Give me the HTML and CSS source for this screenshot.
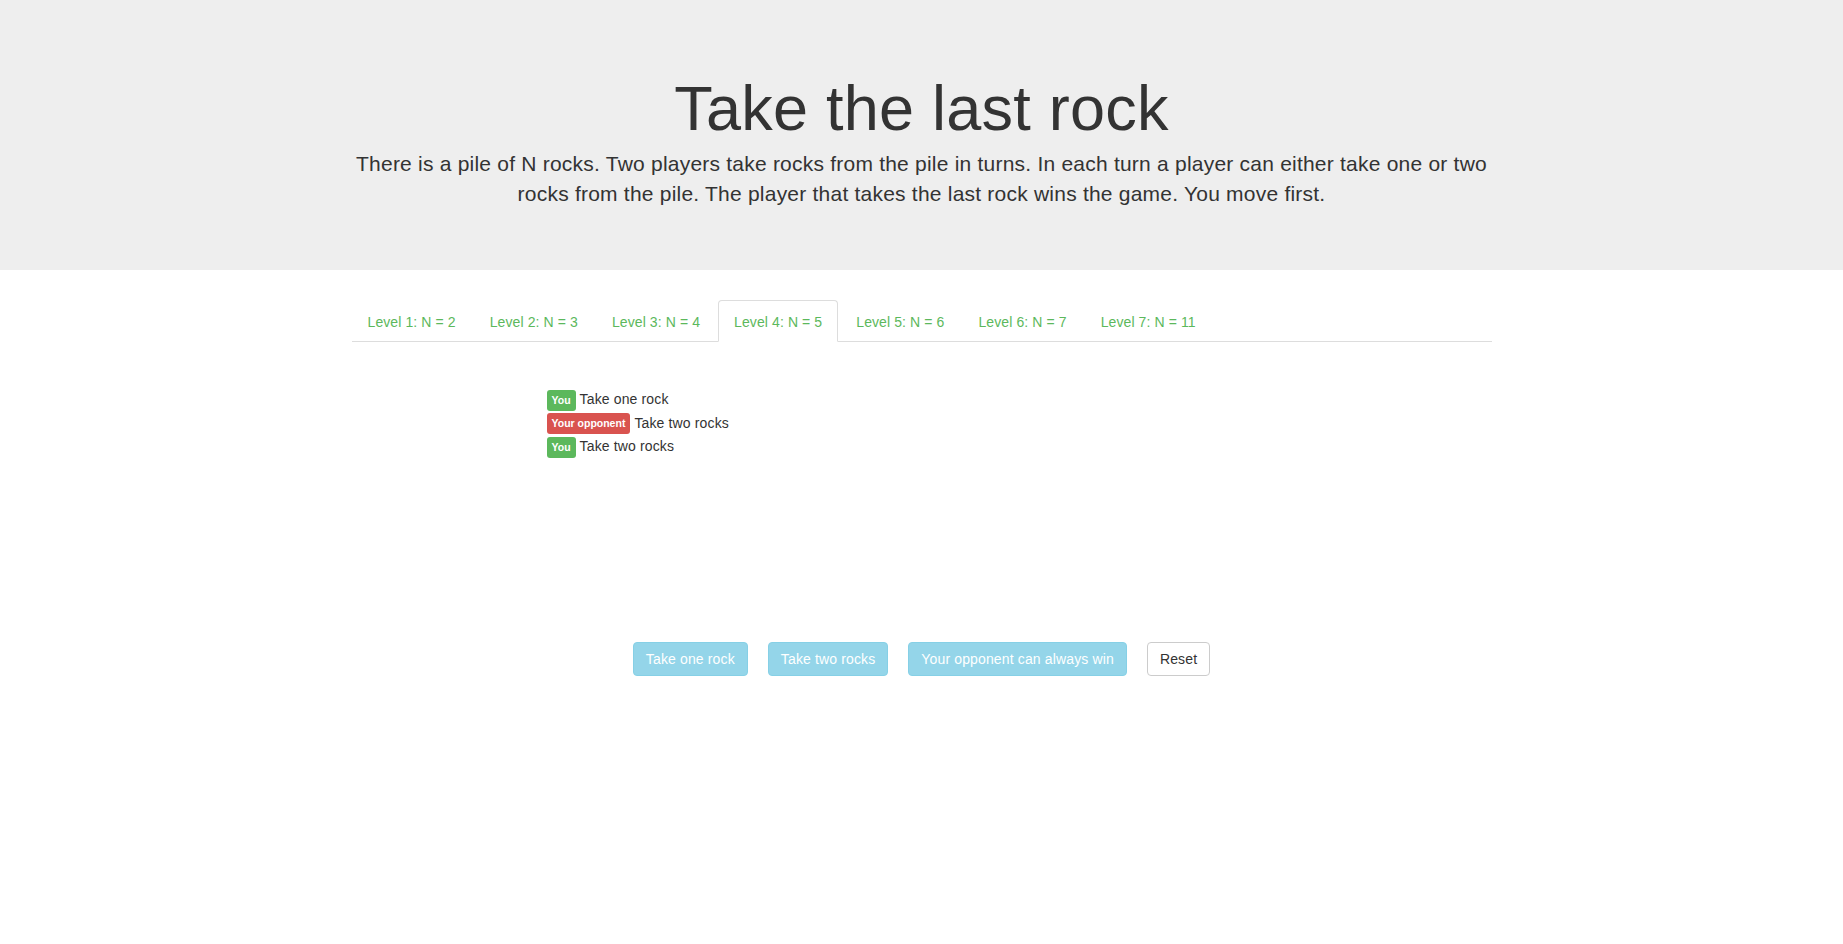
FILE: index.html
```html
<!DOCTYPE html>
<html lang="en">
<head>
<meta charset="utf-8">
<title>Take the last rock</title>
<link rel="stylesheet" href="styles.css">
</head>
<body>
<header class="hero">
  <div class="container">
    <h1 class="hero-title">Take the last rock</h1>
    <p class="hero-lead">There is a pile of N rocks. Two players take rocks from the pile in turns. In each turn a player can either take one or two rocks from the pile. The player that takes the last rock wins the game. You move first.</p>
  </div>
</header>
<main class="container">
  <ul class="tabs">
    <li class="tab"><a class="tab-link">Level 1: N = 2</a></li>
    <li class="tab"><a class="tab-link">Level 2: N = 3</a></li>
    <li class="tab"><a class="tab-link">Level 3: N = 4</a></li>
    <li class="tab"><a class="tab-link active">Level 4: N = 5</a></li>
    <li class="tab"><a class="tab-link">Level 5: N = 6</a></li>
    <li class="tab"><a class="tab-link">Level 6: N = 7</a></li>
    <li class="tab"><a class="tab-link">Level 7: N = 11</a></li>
  </ul>
  <div class="log">
    <div class="log-row"><span class="label label-you">You</span><span class="log-text">Take one rock</span></div>
    <div class="log-row"><span class="label label-opp">Your opponent</span><span class="log-text">Take two rocks</span></div>
    <div class="log-row"><span class="label label-you">You</span><span class="log-text">Take two rocks</span></div>
  </div>
  <div class="actions">
    <button class="btn btn-info" disabled>Take one rock</button>
    <button class="btn btn-info" disabled>Take two rocks</button>
    <button class="btn btn-info" disabled>Your opponent can always win</button>
    <button class="btn btn-default">Reset</button>
  </div>
</main>
</body>
</html>
```
FILE: styles.css
```css
* { box-sizing: border-box; }
html, body { margin: 0; padding: 0; }
body {
  font-family: "Liberation Sans", Arial, Helvetica, sans-serif;
  font-size: 14px;
  line-height: 1.42857;
  letter-spacing: 0.14px;
  color: #333;
  background: #fff;
}
.container {
  width: 1170px;
  margin: 0 auto;
  padding: 0 15px;
}
.hero {
  background: #eee;
  padding: 48px 0 45.6px;
  margin-bottom: 30px;
  text-align: center;
}
.hero-title {
  font-size: 63px;
  font-weight: 500;
  line-height: 1.1;
  letter-spacing: 0.25px;
  margin: 25.5px 0 6.6px;
  color: #333;
}
.hero-lead {
  font-size: 21px;
  font-weight: 200;
  line-height: 30px;
  letter-spacing: 0.22px;
  margin: 0 0 15px;
}
.tabs {
  list-style: none;
  margin: 0;
  padding: 0;
  display: flex;
  border-bottom: 1px solid #ddd;
}
.tab {
  margin-bottom: -1px;
}
.tab-link {
  display: block;
  padding: 11px 15px 9px;
  line-height: 20px;
  letter-spacing: 0.1px;
  margin-right: 2px;
  border: 1px solid transparent;
  border-radius: 4px 4px 0 0;
  color: #5cb85c;
  text-decoration: none;
  cursor: pointer;
}
.tab-link.active {
  border-color: #ddd;
  border-bottom-color: transparent;
  background: #fff;
}
.log {
  margin: 46.75px 0 0 195px;
}
.log-row {
  display: flex;
  align-items: center;
  height: 23.5px;
}
.label {
  display: inline-block;
  font-size: 10.5px;
  font-weight: bold;
  line-height: 13px;
  letter-spacing: 0;
  padding: 4px 5px;
  color: #fff;
  border-radius: 3px;
  margin-right: 4px;
  white-space: nowrap;
}
.label-you { background: #5cb85c; }
.label-opp { background: #d9534f; }
.log-text { line-height: 20px; padding-bottom: 2px; }
.actions {
  display: flex;
  justify-content: center;
  gap: 20px;
  margin-top: 182.75px;
}
.btn {
  font-family: inherit;
  font-size: 14px;
  line-height: 20px;
  letter-spacing: 0.14px;
  padding: 6px 12px;
  border: 1px solid transparent;
  border-radius: 4px;
  cursor: pointer;
}
.btn-info {
  background: #5bc0de;
  border-color: #46b8da;
  color: #fff;
}
.btn-info:disabled {
  opacity: .65;
  cursor: not-allowed;
}
.btn-default {
  background: #fff;
  border-color: #ccc;
  color: #333;
}
```
